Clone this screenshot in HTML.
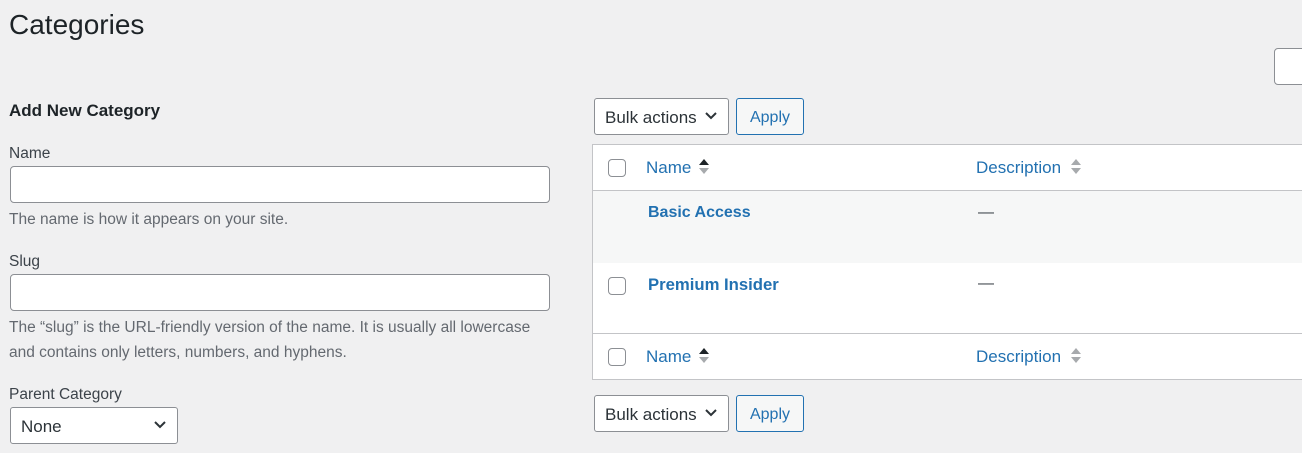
<!DOCTYPE html>
<html><head><meta charset="utf-8"><style>
body{margin:0;width:1302px;height:453px;background:#f0f0f1;font-family:"Liberation Sans",sans-serif;color:#3c434a;font-size:15.5px;position:relative;overflow:hidden}
.a{position:absolute;white-space:nowrap}
.inp{position:absolute;background:#fff;border:1px solid #8c8f94;border-radius:4px;box-sizing:border-box}
.help{color:#646970;font-size:15.5px}
.sel{position:absolute;background:#fff;border:1px solid #8c8f94;border-radius:3px;box-sizing:border-box;height:37px;font-size:17px;color:#2c3338;padding:9px 0 0 10px}
.btn{position:absolute;background:#f6f7f7;border:1px solid #2271b1;border-radius:3px;box-sizing:border-box;height:37px;color:#2271b1;font-size:16px;text-align:center;padding-top:10px}
.chev{position:absolute;right:10px;top:10px}
.cb{position:absolute;width:18px;height:18px;border:1px solid #8c8f94;border-radius:4px;background:#fff;box-sizing:border-box}
.lnk{color:#2271b1;font-size:17px}
.b{font-weight:bold}
</style></head><body>
<div class="a" style="left:9px;top:9px;font-size:28px;color:#1d2327">Categories</div>
<div class="inp" style="left:1274px;top:48px;width:40px;height:37px"></div>
<div class="a b" style="left:9px;top:101px;font-size:17px;color:#1d2327">Add New Category</div>
<div class="a" style="left:9px;top:145px">Name</div>
<div class="inp" style="left:10px;top:166px;width:540px;height:37px"></div>
<div class="a help" style="left:9px;top:211px">The name is how it appears on your site.</div>
<div class="a" style="left:9px;top:253px">Slug</div>
<div class="inp" style="left:10px;top:274px;width:540px;height:37px"></div>
<div class="a help" style="left:9px;top:319px">The “slug” is the URL-friendly version of the name. It is usually all lowercase</div>
<div class="a help" style="left:9px;top:344px">and contains only letters, numbers, and hyphens.</div>
<div class="a" style="left:9px;top:386px">Parent Category</div>
<div class="sel" style="left:10px;top:407px;width:168px">None<svg class="chev" width="14" height="14" viewBox="0 0 14 14"><path d="M2 4l5 5 5-5" fill="none" stroke="#2c3338" stroke-width="2"/></svg></div>

<div class="sel" style="left:594px;top:98px;width:135px">Bulk actions<svg class="chev" width="14" height="14" viewBox="0 0 14 14"><path d="M2 4l5 5 5-5" fill="none" stroke="#2c3338" stroke-width="2"/></svg></div>
<div class="btn" style="left:736px;top:98px;width:68px">Apply</div>

<div style="position:absolute;left:592px;top:144px;width:720px;height:236px;border:1px solid #c3c4c7;background:#fff;box-sizing:border-box">
<div style="position:absolute;left:0;top:45px;width:100%;height:72px;background:#f6f7f7;border-top:1px solid #c3c4c7"></div>
<div style="position:absolute;left:0;top:188px;width:100%;border-top:1px solid #c3c4c7"></div>
</div>
<div class="cb" style="left:608px;top:159px"></div>
<div class="a lnk" style="left:646px;top:158px">Name</div>
<svg class="a" style="left:698px;top:157px" width="12" height="20" viewBox="0 0 12 20"><path d="M1 8l5-6 5 6z" fill="#1d2327"/><path d="M1 11l5 6 5-6z" fill="#a7aaad"/></svg>
<div class="a lnk" style="left:976px;top:158px">Description</div>
<svg class="a" style="left:1070px;top:157px" width="12" height="20" viewBox="0 0 12 20"><path d="M1 8l5-6 5 6z" fill="#a7aaad"/><path d="M1 11l5 6 5-6z" fill="#a7aaad"/></svg>
<div class="a lnk b" style="left:648px;top:204px;font-size:16px">Basic Access</div>
<div class="a" style="left:978px;top:204px;font-size:16px">—</div>
<div class="cb" style="left:608px;top:277px"></div>
<div class="a lnk b" style="left:648px;top:275px;font-size:16.7px">Premium Insider</div>
<div class="a" style="left:978px;top:275px;font-size:16px">—</div>
<div class="cb" style="left:608px;top:348px"></div>
<div class="a lnk" style="left:646px;top:347px">Name</div>
<svg class="a" style="left:698px;top:346px" width="12" height="20" viewBox="0 0 12 20"><path d="M1 8l5-6 5 6z" fill="#1d2327"/><path d="M1 11l5 6 5-6z" fill="#a7aaad"/></svg>
<div class="a lnk" style="left:976px;top:347px">Description</div>
<svg class="a" style="left:1070px;top:346px" width="12" height="20" viewBox="0 0 12 20"><path d="M1 8l5-6 5 6z" fill="#a7aaad"/><path d="M1 11l5 6 5-6z" fill="#a7aaad"/></svg>

<div class="sel" style="left:594px;top:395px;width:135px">Bulk actions<svg class="chev" width="14" height="14" viewBox="0 0 14 14"><path d="M2 4l5 5 5-5" fill="none" stroke="#2c3338" stroke-width="2"/></svg></div>
<div class="btn" style="left:736px;top:395px;width:68px">Apply</div>
</body></html>
